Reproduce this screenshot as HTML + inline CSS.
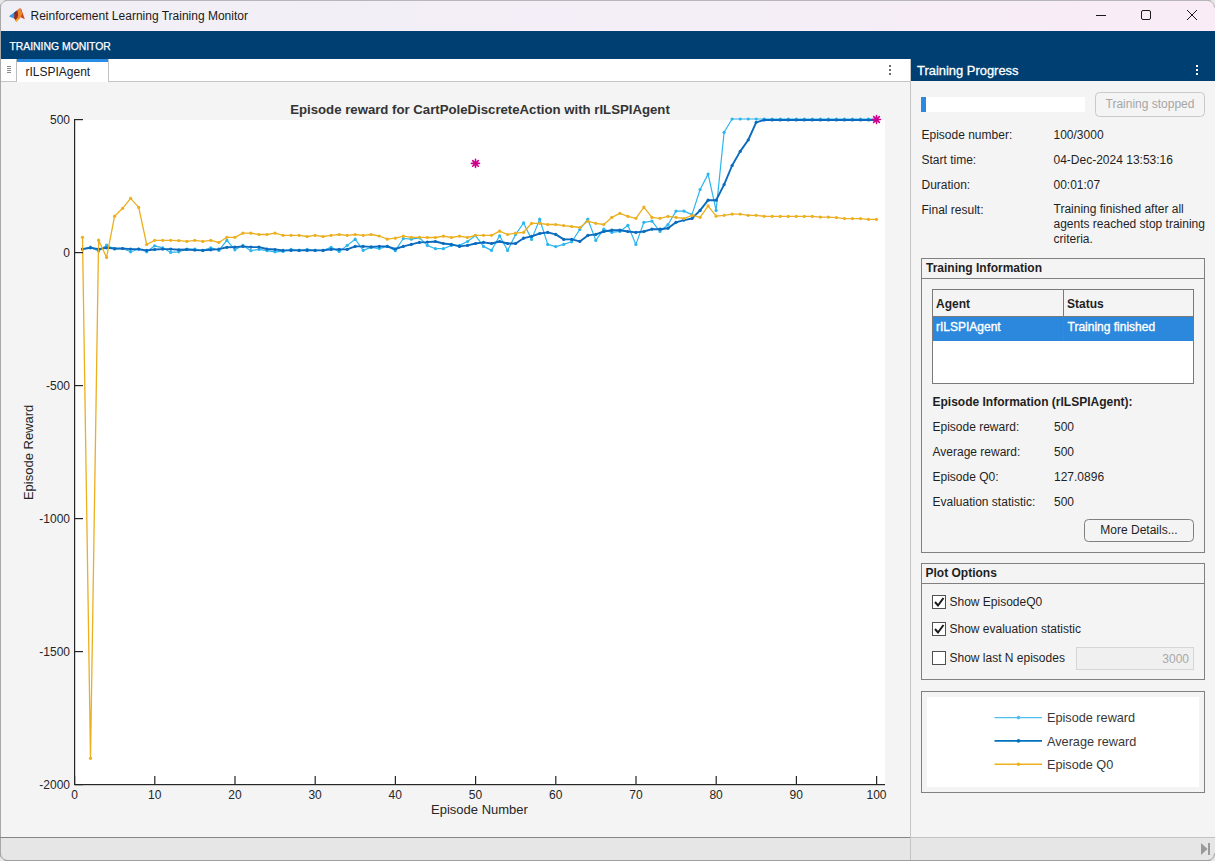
<!DOCTYPE html><html><head><meta charset="utf-8"><style>
html,body{margin:0;padding:0;width:1215px;height:861px;overflow:hidden;background:#f4f4f4;}
svg{display:block;position:absolute;left:0;top:0;}
text{font-family:"Liberation Sans", sans-serif;}
</style></head><body>
<svg width="1215" height="861" viewBox="0 0 1215 861">
<defs><linearGradient id="tb" x1="0" x2="1" y1="0" y2="0"><stop offset="0" stop-color="#f1eff6"/><stop offset="0.6" stop-color="#f4eef7"/><stop offset="1" stop-color="#f9ecf6"/></linearGradient></defs>
<rect x="0" y="0" width="1215" height="861" fill="#f4f4f4"/>
<rect x="0" y="0" width="1215" height="31" fill="url(#tb)"/>
<rect x="0" y="0" width="1215" height="1" fill="#b9b6bb"/>
<g><path d="M9.2,15.9 L14.5,12.3 L16.8,10.6 L16,18.3 L14.4,18.6 L9.6,16.8 Z" fill="#3b98df"/><path d="M14.3,13.2 L17.6,9.8 L19.2,17.4 L16.2,21.6 L14.2,18.6 Z" fill="#9e2a1c"/><path d="M17.4,9.9 L19.8,7.9 L21.9,13 L20.6,17.4 L16.2,22 L18.2,15 Z" fill="#ea8a2b"/><path d="M19.8,7.9 L21.4,9.3 L24.8,19.2 L20.6,17.3 L21.9,13 Z" fill="#d0491e"/><path d="M15.2,20 L18.4,17.6 L16.3,22.2 Z" fill="#f3b11f"/><path d="M13.6,13.2 L16.8,10.4 L15.6,14.2 Z" fill="#27457e"/></g>
<text x="30.5" y="20" font-size="12" fill="#1a1a1a">Reinforcement Learning Training Monitor</text>
<rect x="1096" y="15" width="10" height="1" fill="#1a1a1a"/>
<rect x="1141.5" y="10.5" width="9" height="9" rx="1.5" fill="none" stroke="#1a1a1a" stroke-width="1"/>
<path d="M1187,10 L1197,20 M1197,10 L1187,20" stroke="#1a1a1a" stroke-width="1"/>
<rect x="0" y="31" width="1215" height="28" fill="#003f72"/>
<text x="9.4" y="50" font-size="10.5" fill="#ffffff" stroke="#ffffff" stroke-width="0.25" textLength="101.5" lengthAdjust="spacingAndGlyphs">TRAINING MONITOR</text>
<rect x="1" y="59" width="909" height="22" fill="#ffffff"/>
<rect x="1" y="81" width="909" height="1" fill="#c4c4c4"/>
<rect x="17" y="81" width="91" height="1" fill="#ffffff"/>
<rect x="16" y="59" width="1" height="23" fill="#bdbdbd"/>
<rect x="108" y="59" width="1" height="23" fill="#c4c4c4"/>
<rect x="17" y="59" width="91" height="3" fill="#2a8de4"/>
<rect x="7" y="66" width="4" height="1" fill="#8a8a8a"/>
<rect x="7" y="68" width="4" height="1" fill="#8a8a8a"/>
<rect x="7" y="70" width="4" height="1" fill="#8a8a8a"/>
<rect x="7" y="72" width="4" height="1" fill="#8a8a8a"/>
<text x="25.5" y="76" font-size="12" fill="#1a1a1a">rILSPIAgent</text>
<rect x="889" y="65" width="2" height="2" fill="#6a6a6a"/>
<rect x="889" y="69" width="2" height="2" fill="#6a6a6a"/>
<rect x="889" y="73" width="2" height="2" fill="#6a6a6a"/>
<rect x="911" y="59" width="304" height="22" fill="#003f72"/>
<text x="917" y="75" font-size="13" fill="#ffffff" stroke="#ffffff" stroke-width="0.3" textLength="101.5" lengthAdjust="spacingAndGlyphs">Training Progress</text>
<rect x="1196" y="65" width="2" height="2" fill="#ffffff"/>
<rect x="1196" y="69" width="2" height="2" fill="#ffffff"/>
<rect x="1196" y="73" width="2" height="2" fill="#ffffff"/>
<rect x="910" y="59" width="1" height="802" fill="#c4c4c4"/>
<rect x="0" y="0" width="1" height="861" fill="#a8a8a8"/>
<rect x="0" y="837" width="910" height="1" fill="#858585"/>
<rect x="911" y="837" width="304" height="1" fill="#c2c2c2"/>
<rect x="1" y="838" width="909" height="22" fill="#e6e6e6"/>
<rect x="911" y="838" width="304" height="22" fill="#e6e6e6"/>
<rect x="0" y="860" width="1215" height="1" fill="#9e9e9e"/>
<path d="M1201,843 L1207.6,849 L1201,855 Z" fill="#9a9a9a"/><rect x="1208" y="843" width="2" height="12" fill="#9a9a9a"/>
<rect x="75" y="120" width="810" height="664" fill="#ffffff"/>
<text x="480" y="114" font-size="13.2" font-weight="bold" text-anchor="middle" fill="#333333">Episode reward for CartPoleDiscreteAction with rILSPIAgent</text>
<polyline points="82.5,249.1 90.5,247.2 98.6,251.1 106.6,245.2 114.6,249.1 122.6,248.5 130.6,251.8 138.7,249.1 146.7,251.8 154.7,245.8 162.7,247.8 170.7,252.4 178.8,251.8 186.8,249.1 194.8,249.1 202.8,250.4 210.8,247.8 218.9,250.4 226.9,240.4 234.9,249.8 242.9,245.4 250.9,250.7 259.0,249.4 267.0,250.7 275.0,251.8 283.0,251.4 291.0,249.4 299.1,250.4 307.1,249.4 315.1,250.4 323.1,250.4 331.1,247.4 339.2,251.6 347.2,245.4 355.2,239.2 363.2,250.4 371.2,247.4 379.3,248.6 387.3,246.4 395.3,250.7 403.3,238.5 411.3,239.2 419.4,237.8 427.4,245.4 435.4,248.7 443.4,248.7 451.4,245.4 459.5,245.4 467.5,241.5 475.5,235.6 483.5,246.4 491.5,250.4 499.6,235.8 507.6,250.4 515.6,234.5 523.6,222.9 531.6,239.4 539.7,219.2 547.7,244.4 555.7,246.6 563.7,244.4 571.7,241.8 579.8,229.5 587.8,219.2 595.8,240.4 603.8,229.2 611.8,232.4 619.9,231.5 627.9,225.3 635.9,244.4 643.9,222.3 651.9,221.2 660.0,231.5 668.0,224.5 676.0,211.1 684.0,211.1 692.0,214.6 700.1,189.5 708.1,174.1 716.1,210.4 724.1,132.3 732.1,119.0 740.2,119.0 748.2,119.0 756.2,119.0 764.2,119.0 772.2,119.0 780.3,119.0 788.3,119.0 796.3,119.0 804.3,119.0 812.3,119.0 820.4,119.0 828.4,119.0 836.4,119.0 844.4,119.0 852.4,119.0 860.5,119.0 868.5,119.0 876.5,119.0" fill="none" stroke-linejoin="round" stroke="#2db5ee" stroke-width="1.2"/>
<g fill="#2db5ee">
<circle cx="82.5" cy="249.1" r="1.6"/>
<circle cx="90.5" cy="247.2" r="1.6"/>
<circle cx="98.6" cy="251.1" r="1.6"/>
<circle cx="106.6" cy="245.2" r="1.6"/>
<circle cx="114.6" cy="249.1" r="1.6"/>
<circle cx="122.6" cy="248.5" r="1.6"/>
<circle cx="130.6" cy="251.8" r="1.6"/>
<circle cx="138.7" cy="249.1" r="1.6"/>
<circle cx="146.7" cy="251.8" r="1.6"/>
<circle cx="154.7" cy="245.8" r="1.6"/>
<circle cx="162.7" cy="247.8" r="1.6"/>
<circle cx="170.7" cy="252.4" r="1.6"/>
<circle cx="178.8" cy="251.8" r="1.6"/>
<circle cx="186.8" cy="249.1" r="1.6"/>
<circle cx="194.8" cy="249.1" r="1.6"/>
<circle cx="202.8" cy="250.4" r="1.6"/>
<circle cx="210.8" cy="247.8" r="1.6"/>
<circle cx="218.9" cy="250.4" r="1.6"/>
<circle cx="226.9" cy="240.4" r="1.6"/>
<circle cx="234.9" cy="249.8" r="1.6"/>
<circle cx="242.9" cy="245.4" r="1.6"/>
<circle cx="250.9" cy="250.7" r="1.6"/>
<circle cx="259.0" cy="249.4" r="1.6"/>
<circle cx="267.0" cy="250.7" r="1.6"/>
<circle cx="275.0" cy="251.8" r="1.6"/>
<circle cx="283.0" cy="251.4" r="1.6"/>
<circle cx="291.0" cy="249.4" r="1.6"/>
<circle cx="299.1" cy="250.4" r="1.6"/>
<circle cx="307.1" cy="249.4" r="1.6"/>
<circle cx="315.1" cy="250.4" r="1.6"/>
<circle cx="323.1" cy="250.4" r="1.6"/>
<circle cx="331.1" cy="247.4" r="1.6"/>
<circle cx="339.2" cy="251.6" r="1.6"/>
<circle cx="347.2" cy="245.4" r="1.6"/>
<circle cx="355.2" cy="239.2" r="1.6"/>
<circle cx="363.2" cy="250.4" r="1.6"/>
<circle cx="371.2" cy="247.4" r="1.6"/>
<circle cx="379.3" cy="248.6" r="1.6"/>
<circle cx="387.3" cy="246.4" r="1.6"/>
<circle cx="395.3" cy="250.7" r="1.6"/>
<circle cx="403.3" cy="238.5" r="1.6"/>
<circle cx="411.3" cy="239.2" r="1.6"/>
<circle cx="419.4" cy="237.8" r="1.6"/>
<circle cx="427.4" cy="245.4" r="1.6"/>
<circle cx="435.4" cy="248.7" r="1.6"/>
<circle cx="443.4" cy="248.7" r="1.6"/>
<circle cx="451.4" cy="245.4" r="1.6"/>
<circle cx="459.5" cy="245.4" r="1.6"/>
<circle cx="467.5" cy="241.5" r="1.6"/>
<circle cx="475.5" cy="235.6" r="1.6"/>
<circle cx="483.5" cy="246.4" r="1.6"/>
<circle cx="491.5" cy="250.4" r="1.6"/>
<circle cx="499.6" cy="235.8" r="1.6"/>
<circle cx="507.6" cy="250.4" r="1.6"/>
<circle cx="515.6" cy="234.5" r="1.6"/>
<circle cx="523.6" cy="222.9" r="1.6"/>
<circle cx="531.6" cy="239.4" r="1.6"/>
<circle cx="539.7" cy="219.2" r="1.6"/>
<circle cx="547.7" cy="244.4" r="1.6"/>
<circle cx="555.7" cy="246.6" r="1.6"/>
<circle cx="563.7" cy="244.4" r="1.6"/>
<circle cx="571.7" cy="241.8" r="1.6"/>
<circle cx="579.8" cy="229.5" r="1.6"/>
<circle cx="587.8" cy="219.2" r="1.6"/>
<circle cx="595.8" cy="240.4" r="1.6"/>
<circle cx="603.8" cy="229.2" r="1.6"/>
<circle cx="611.8" cy="232.4" r="1.6"/>
<circle cx="619.9" cy="231.5" r="1.6"/>
<circle cx="627.9" cy="225.3" r="1.6"/>
<circle cx="635.9" cy="244.4" r="1.6"/>
<circle cx="643.9" cy="222.3" r="1.6"/>
<circle cx="651.9" cy="221.2" r="1.6"/>
<circle cx="660.0" cy="231.5" r="1.6"/>
<circle cx="668.0" cy="224.5" r="1.6"/>
<circle cx="676.0" cy="211.1" r="1.6"/>
<circle cx="684.0" cy="211.1" r="1.6"/>
<circle cx="692.0" cy="214.6" r="1.6"/>
<circle cx="700.1" cy="189.5" r="1.6"/>
<circle cx="708.1" cy="174.1" r="1.6"/>
<circle cx="716.1" cy="210.4" r="1.6"/>
<circle cx="724.1" cy="132.3" r="1.6"/>
<circle cx="732.1" cy="119.0" r="1.6"/>
<circle cx="740.2" cy="119.0" r="1.6"/>
<circle cx="748.2" cy="119.0" r="1.6"/>
<circle cx="756.2" cy="119.0" r="1.6"/>
<circle cx="764.2" cy="119.0" r="1.6"/>
<circle cx="772.2" cy="119.0" r="1.6"/>
<circle cx="780.3" cy="119.0" r="1.6"/>
<circle cx="788.3" cy="119.0" r="1.6"/>
<circle cx="796.3" cy="119.0" r="1.6"/>
<circle cx="804.3" cy="119.0" r="1.6"/>
<circle cx="812.3" cy="119.0" r="1.6"/>
<circle cx="820.4" cy="119.0" r="1.6"/>
<circle cx="828.4" cy="119.0" r="1.6"/>
<circle cx="836.4" cy="119.0" r="1.6"/>
<circle cx="844.4" cy="119.0" r="1.6"/>
<circle cx="852.4" cy="119.0" r="1.6"/>
<circle cx="860.5" cy="119.0" r="1.6"/>
<circle cx="868.5" cy="119.0" r="1.6"/>
<circle cx="876.5" cy="119.0" r="1.6"/>
</g>
<polyline points="82.5,249.1 90.5,247.8 98.6,249.1 106.6,247.8 114.6,248.5 122.6,248.5 130.6,249.1 138.7,249.1 146.7,250.4 154.7,249.5 162.7,249.1 170.7,249.1 178.8,249.8 186.8,249.5 194.8,250.1 202.8,250.4 210.8,249.8 218.9,249.1 226.9,247.3 234.9,247.1 242.9,246.4 250.9,247.1 259.0,247.1 267.0,249.0 275.0,249.5 283.0,250.4 291.0,250.4 299.1,250.4 307.1,250.4 315.1,250.4 323.1,250.4 331.1,249.4 339.2,249.4 347.2,249.4 355.2,246.4 363.2,246.4 371.2,246.9 379.3,246.4 387.3,246.4 395.3,249.0 403.3,246.4 411.3,244.4 419.4,242.4 427.4,242.1 435.4,241.5 443.4,243.5 451.4,244.4 459.5,246.4 467.5,245.4 475.5,243.5 483.5,242.4 491.5,243.5 499.6,241.5 507.6,243.5 515.6,243.5 523.6,238.2 531.6,236.3 539.7,233.5 547.7,232.4 555.7,234.4 563.7,239.4 571.7,239.4 579.8,241.4 587.8,235.4 595.8,234.4 603.8,231.5 611.8,230.2 619.9,230.2 627.9,231.5 635.9,232.4 643.9,231.5 651.9,229.2 660.0,229.2 668.0,228.2 676.0,222.3 684.0,220.1 692.0,218.5 700.1,210.4 708.1,200.2 716.1,200.2 724.1,184.6 732.1,165.5 740.2,151.4 748.2,140.0 756.2,122.3 764.2,120.0 772.2,120.0 780.3,120.0 788.3,120.0 796.3,120.0 804.3,120.0 812.3,120.0 820.4,120.0 828.4,120.0 836.4,120.0 844.4,120.0 852.4,120.0 860.5,120.0 868.5,120.0 876.5,120.0" fill="none" stroke-linejoin="round" stroke="#0a6bbf" stroke-width="1.9"/>
<g fill="#0a6bbf">
<circle cx="82.5" cy="249.1" r="1.6"/>
<circle cx="90.5" cy="247.8" r="1.6"/>
<circle cx="98.6" cy="249.1" r="1.6"/>
<circle cx="106.6" cy="247.8" r="1.6"/>
<circle cx="114.6" cy="248.5" r="1.6"/>
<circle cx="122.6" cy="248.5" r="1.6"/>
<circle cx="130.6" cy="249.1" r="1.6"/>
<circle cx="138.7" cy="249.1" r="1.6"/>
<circle cx="146.7" cy="250.4" r="1.6"/>
<circle cx="154.7" cy="249.5" r="1.6"/>
<circle cx="162.7" cy="249.1" r="1.6"/>
<circle cx="170.7" cy="249.1" r="1.6"/>
<circle cx="178.8" cy="249.8" r="1.6"/>
<circle cx="186.8" cy="249.5" r="1.6"/>
<circle cx="194.8" cy="250.1" r="1.6"/>
<circle cx="202.8" cy="250.4" r="1.6"/>
<circle cx="210.8" cy="249.8" r="1.6"/>
<circle cx="218.9" cy="249.1" r="1.6"/>
<circle cx="226.9" cy="247.3" r="1.6"/>
<circle cx="234.9" cy="247.1" r="1.6"/>
<circle cx="242.9" cy="246.4" r="1.6"/>
<circle cx="250.9" cy="247.1" r="1.6"/>
<circle cx="259.0" cy="247.1" r="1.6"/>
<circle cx="267.0" cy="249.0" r="1.6"/>
<circle cx="275.0" cy="249.5" r="1.6"/>
<circle cx="283.0" cy="250.4" r="1.6"/>
<circle cx="291.0" cy="250.4" r="1.6"/>
<circle cx="299.1" cy="250.4" r="1.6"/>
<circle cx="307.1" cy="250.4" r="1.6"/>
<circle cx="315.1" cy="250.4" r="1.6"/>
<circle cx="323.1" cy="250.4" r="1.6"/>
<circle cx="331.1" cy="249.4" r="1.6"/>
<circle cx="339.2" cy="249.4" r="1.6"/>
<circle cx="347.2" cy="249.4" r="1.6"/>
<circle cx="355.2" cy="246.4" r="1.6"/>
<circle cx="363.2" cy="246.4" r="1.6"/>
<circle cx="371.2" cy="246.9" r="1.6"/>
<circle cx="379.3" cy="246.4" r="1.6"/>
<circle cx="387.3" cy="246.4" r="1.6"/>
<circle cx="395.3" cy="249.0" r="1.6"/>
<circle cx="403.3" cy="246.4" r="1.6"/>
<circle cx="411.3" cy="244.4" r="1.6"/>
<circle cx="419.4" cy="242.4" r="1.6"/>
<circle cx="427.4" cy="242.1" r="1.6"/>
<circle cx="435.4" cy="241.5" r="1.6"/>
<circle cx="443.4" cy="243.5" r="1.6"/>
<circle cx="451.4" cy="244.4" r="1.6"/>
<circle cx="459.5" cy="246.4" r="1.6"/>
<circle cx="467.5" cy="245.4" r="1.6"/>
<circle cx="475.5" cy="243.5" r="1.6"/>
<circle cx="483.5" cy="242.4" r="1.6"/>
<circle cx="491.5" cy="243.5" r="1.6"/>
<circle cx="499.6" cy="241.5" r="1.6"/>
<circle cx="507.6" cy="243.5" r="1.6"/>
<circle cx="515.6" cy="243.5" r="1.6"/>
<circle cx="523.6" cy="238.2" r="1.6"/>
<circle cx="531.6" cy="236.3" r="1.6"/>
<circle cx="539.7" cy="233.5" r="1.6"/>
<circle cx="547.7" cy="232.4" r="1.6"/>
<circle cx="555.7" cy="234.4" r="1.6"/>
<circle cx="563.7" cy="239.4" r="1.6"/>
<circle cx="571.7" cy="239.4" r="1.6"/>
<circle cx="579.8" cy="241.4" r="1.6"/>
<circle cx="587.8" cy="235.4" r="1.6"/>
<circle cx="595.8" cy="234.4" r="1.6"/>
<circle cx="603.8" cy="231.5" r="1.6"/>
<circle cx="611.8" cy="230.2" r="1.6"/>
<circle cx="619.9" cy="230.2" r="1.6"/>
<circle cx="627.9" cy="231.5" r="1.6"/>
<circle cx="635.9" cy="232.4" r="1.6"/>
<circle cx="643.9" cy="231.5" r="1.6"/>
<circle cx="651.9" cy="229.2" r="1.6"/>
<circle cx="660.0" cy="229.2" r="1.6"/>
<circle cx="668.0" cy="228.2" r="1.6"/>
<circle cx="676.0" cy="222.3" r="1.6"/>
<circle cx="684.0" cy="220.1" r="1.6"/>
<circle cx="692.0" cy="218.5" r="1.6"/>
<circle cx="700.1" cy="210.4" r="1.6"/>
<circle cx="708.1" cy="200.2" r="1.6"/>
<circle cx="716.1" cy="200.2" r="1.6"/>
<circle cx="724.1" cy="184.6" r="1.6"/>
<circle cx="732.1" cy="165.5" r="1.6"/>
<circle cx="740.2" cy="151.4" r="1.6"/>
<circle cx="748.2" cy="140.0" r="1.6"/>
<circle cx="756.2" cy="122.3" r="1.6"/>
<circle cx="764.2" cy="120.0" r="1.6"/>
<circle cx="772.2" cy="120.0" r="1.6"/>
<circle cx="780.3" cy="120.0" r="1.6"/>
<circle cx="788.3" cy="120.0" r="1.6"/>
<circle cx="796.3" cy="120.0" r="1.6"/>
<circle cx="804.3" cy="120.0" r="1.6"/>
<circle cx="812.3" cy="120.0" r="1.6"/>
<circle cx="820.4" cy="120.0" r="1.6"/>
<circle cx="828.4" cy="120.0" r="1.6"/>
<circle cx="836.4" cy="120.0" r="1.6"/>
<circle cx="844.4" cy="120.0" r="1.6"/>
<circle cx="852.4" cy="120.0" r="1.6"/>
<circle cx="860.5" cy="120.0" r="1.6"/>
<circle cx="868.5" cy="120.0" r="1.6"/>
<circle cx="876.5" cy="120.0" r="1.6"/>
</g>
<polyline points="82.5,237.3 90.5,758.3 98.6,240.2 106.6,257.4 114.6,216.2 122.6,208.3 130.6,198.4 138.7,207.4 146.7,244.5 154.7,240.3 162.7,240.3 170.7,240.3 178.8,240.6 186.8,241.4 194.8,240.3 202.8,241.4 210.8,240.3 218.9,242.5 226.9,237.3 234.9,237.3 242.9,233.2 250.9,233.2 259.0,234.5 267.0,234.5 275.0,233.2 283.0,235.3 291.0,235.3 299.1,235.3 307.1,236.5 315.1,235.3 323.1,236.5 331.1,235.3 339.2,234.5 347.2,235.3 355.2,234.5 363.2,235.3 371.2,234.5 379.3,236.0 387.3,239.2 395.3,238.2 403.3,236.2 411.3,237.3 419.4,237.3 427.4,237.5 435.4,237.5 443.4,236.2 451.4,237.5 459.5,236.2 467.5,237.5 475.5,235.3 483.5,235.3 491.5,235.3 499.6,231.2 507.6,234.5 515.6,233.2 523.6,232.3 531.6,223.3 539.7,223.3 547.7,224.5 555.7,224.5 563.7,225.6 571.7,226.5 579.8,227.5 587.8,221.2 595.8,223.3 603.8,224.5 611.8,217.4 619.9,213.3 627.9,216.3 635.9,218.3 643.9,207.1 651.9,217.4 660.0,218.3 668.0,216.3 676.0,217.4 684.0,218.5 692.0,215.3 700.1,217.3 708.1,205.9 716.1,216.2 724.1,215.3 732.1,214.1 740.2,214.1 748.2,215.3 756.2,215.3 764.2,216.3 772.2,216.3 780.3,216.4 788.3,216.4 796.3,216.4 804.3,216.4 812.3,216.4 820.4,217.1 828.4,217.1 836.4,217.6 844.4,218.6 852.4,218.6 860.5,218.6 868.5,219.4 876.5,219.4" fill="none" stroke-linejoin="round" stroke="#ecaf1f" stroke-width="1.3"/>
<g fill="#ecaf1f">
<circle cx="82.5" cy="237.3" r="1.6"/>
<circle cx="90.5" cy="758.3" r="1.6"/>
<circle cx="98.6" cy="240.2" r="1.6"/>
<circle cx="106.6" cy="257.4" r="1.6"/>
<circle cx="114.6" cy="216.2" r="1.6"/>
<circle cx="122.6" cy="208.3" r="1.6"/>
<circle cx="130.6" cy="198.4" r="1.6"/>
<circle cx="138.7" cy="207.4" r="1.6"/>
<circle cx="146.7" cy="244.5" r="1.6"/>
<circle cx="154.7" cy="240.3" r="1.6"/>
<circle cx="162.7" cy="240.3" r="1.6"/>
<circle cx="170.7" cy="240.3" r="1.6"/>
<circle cx="178.8" cy="240.6" r="1.6"/>
<circle cx="186.8" cy="241.4" r="1.6"/>
<circle cx="194.8" cy="240.3" r="1.6"/>
<circle cx="202.8" cy="241.4" r="1.6"/>
<circle cx="210.8" cy="240.3" r="1.6"/>
<circle cx="218.9" cy="242.5" r="1.6"/>
<circle cx="226.9" cy="237.3" r="1.6"/>
<circle cx="234.9" cy="237.3" r="1.6"/>
<circle cx="242.9" cy="233.2" r="1.6"/>
<circle cx="250.9" cy="233.2" r="1.6"/>
<circle cx="259.0" cy="234.5" r="1.6"/>
<circle cx="267.0" cy="234.5" r="1.6"/>
<circle cx="275.0" cy="233.2" r="1.6"/>
<circle cx="283.0" cy="235.3" r="1.6"/>
<circle cx="291.0" cy="235.3" r="1.6"/>
<circle cx="299.1" cy="235.3" r="1.6"/>
<circle cx="307.1" cy="236.5" r="1.6"/>
<circle cx="315.1" cy="235.3" r="1.6"/>
<circle cx="323.1" cy="236.5" r="1.6"/>
<circle cx="331.1" cy="235.3" r="1.6"/>
<circle cx="339.2" cy="234.5" r="1.6"/>
<circle cx="347.2" cy="235.3" r="1.6"/>
<circle cx="355.2" cy="234.5" r="1.6"/>
<circle cx="363.2" cy="235.3" r="1.6"/>
<circle cx="371.2" cy="234.5" r="1.6"/>
<circle cx="379.3" cy="236.0" r="1.6"/>
<circle cx="387.3" cy="239.2" r="1.6"/>
<circle cx="395.3" cy="238.2" r="1.6"/>
<circle cx="403.3" cy="236.2" r="1.6"/>
<circle cx="411.3" cy="237.3" r="1.6"/>
<circle cx="419.4" cy="237.3" r="1.6"/>
<circle cx="427.4" cy="237.5" r="1.6"/>
<circle cx="435.4" cy="237.5" r="1.6"/>
<circle cx="443.4" cy="236.2" r="1.6"/>
<circle cx="451.4" cy="237.5" r="1.6"/>
<circle cx="459.5" cy="236.2" r="1.6"/>
<circle cx="467.5" cy="237.5" r="1.6"/>
<circle cx="475.5" cy="235.3" r="1.6"/>
<circle cx="483.5" cy="235.3" r="1.6"/>
<circle cx="491.5" cy="235.3" r="1.6"/>
<circle cx="499.6" cy="231.2" r="1.6"/>
<circle cx="507.6" cy="234.5" r="1.6"/>
<circle cx="515.6" cy="233.2" r="1.6"/>
<circle cx="523.6" cy="232.3" r="1.6"/>
<circle cx="531.6" cy="223.3" r="1.6"/>
<circle cx="539.7" cy="223.3" r="1.6"/>
<circle cx="547.7" cy="224.5" r="1.6"/>
<circle cx="555.7" cy="224.5" r="1.6"/>
<circle cx="563.7" cy="225.6" r="1.6"/>
<circle cx="571.7" cy="226.5" r="1.6"/>
<circle cx="579.8" cy="227.5" r="1.6"/>
<circle cx="587.8" cy="221.2" r="1.6"/>
<circle cx="595.8" cy="223.3" r="1.6"/>
<circle cx="603.8" cy="224.5" r="1.6"/>
<circle cx="611.8" cy="217.4" r="1.6"/>
<circle cx="619.9" cy="213.3" r="1.6"/>
<circle cx="627.9" cy="216.3" r="1.6"/>
<circle cx="635.9" cy="218.3" r="1.6"/>
<circle cx="643.9" cy="207.1" r="1.6"/>
<circle cx="651.9" cy="217.4" r="1.6"/>
<circle cx="660.0" cy="218.3" r="1.6"/>
<circle cx="668.0" cy="216.3" r="1.6"/>
<circle cx="676.0" cy="217.4" r="1.6"/>
<circle cx="684.0" cy="218.5" r="1.6"/>
<circle cx="692.0" cy="215.3" r="1.6"/>
<circle cx="700.1" cy="217.3" r="1.6"/>
<circle cx="708.1" cy="205.9" r="1.6"/>
<circle cx="716.1" cy="216.2" r="1.6"/>
<circle cx="724.1" cy="215.3" r="1.6"/>
<circle cx="732.1" cy="214.1" r="1.6"/>
<circle cx="740.2" cy="214.1" r="1.6"/>
<circle cx="748.2" cy="215.3" r="1.6"/>
<circle cx="756.2" cy="215.3" r="1.6"/>
<circle cx="764.2" cy="216.3" r="1.6"/>
<circle cx="772.2" cy="216.3" r="1.6"/>
<circle cx="780.3" cy="216.4" r="1.6"/>
<circle cx="788.3" cy="216.4" r="1.6"/>
<circle cx="796.3" cy="216.4" r="1.6"/>
<circle cx="804.3" cy="216.4" r="1.6"/>
<circle cx="812.3" cy="216.4" r="1.6"/>
<circle cx="820.4" cy="217.1" r="1.6"/>
<circle cx="828.4" cy="217.1" r="1.6"/>
<circle cx="836.4" cy="217.6" r="1.6"/>
<circle cx="844.4" cy="218.6" r="1.6"/>
<circle cx="852.4" cy="218.6" r="1.6"/>
<circle cx="860.5" cy="218.6" r="1.6"/>
<circle cx="868.5" cy="219.4" r="1.6"/>
<circle cx="876.5" cy="219.4" r="1.6"/>
</g>
<path d="M471.50,163.40 L479.50,163.40 M472.67,160.57 L478.33,166.23 M475.50,159.40 L475.50,167.40 M478.33,160.57 L472.67,166.23" stroke="#cf008e" stroke-width="1.6" stroke-linecap="round"/>
<path d="M872.50,119.50 L880.50,119.50 M873.67,116.67 L879.33,122.33 M876.50,115.50 L876.50,123.50 M879.33,116.67 L873.67,122.33" stroke="#cf008e" stroke-width="1.6" stroke-linecap="round"/>
<g fill="#262626">
<rect x="74" y="119" width="1.2" height="666"/>
<rect x="74" y="784" width="811" height="1.2"/>
<rect x="74.0" y="776" width="1.2" height="8"/>
<text x="74.5" y="799" font-size="12" text-anchor="middle">0</text>
<rect x="154.2" y="776" width="1.2" height="8"/>
<text x="154.7" y="799" font-size="12" text-anchor="middle">10</text>
<rect x="234.4" y="776" width="1.2" height="8"/>
<text x="234.9" y="799" font-size="12" text-anchor="middle">20</text>
<rect x="314.6" y="776" width="1.2" height="8"/>
<text x="315.1" y="799" font-size="12" text-anchor="middle">30</text>
<rect x="394.8" y="776" width="1.2" height="8"/>
<text x="395.3" y="799" font-size="12" text-anchor="middle">40</text>
<rect x="475.0" y="776" width="1.2" height="8"/>
<text x="475.5" y="799" font-size="12" text-anchor="middle">50</text>
<rect x="555.2" y="776" width="1.2" height="8"/>
<text x="555.7" y="799" font-size="12" text-anchor="middle">60</text>
<rect x="635.4" y="776" width="1.2" height="8"/>
<text x="635.9" y="799" font-size="12" text-anchor="middle">70</text>
<rect x="715.6" y="776" width="1.2" height="8"/>
<text x="716.1" y="799" font-size="12" text-anchor="middle">80</text>
<rect x="795.8" y="776" width="1.2" height="8"/>
<text x="796.3" y="799" font-size="12" text-anchor="middle">90</text>
<rect x="876.0" y="776" width="1.2" height="8"/>
<text x="876.5" y="799" font-size="12" text-anchor="middle">100</text>
<rect x="75" y="119.0" width="8" height="1.2"/>
<text x="70" y="123.6" font-size="12" text-anchor="end">500</text>
<rect x="75" y="252.0" width="8" height="1.2"/>
<text x="70" y="256.6" font-size="12" text-anchor="end">0</text>
<rect x="75" y="385.0" width="8" height="1.2"/>
<text x="70" y="389.6" font-size="12" text-anchor="end">-500</text>
<rect x="75" y="518.0" width="8" height="1.2"/>
<text x="70" y="522.6" font-size="12" text-anchor="end">-1000</text>
<rect x="75" y="651.0" width="8" height="1.2"/>
<text x="70" y="655.6" font-size="12" text-anchor="end">-1500</text>
<rect x="75" y="784.0" width="8" height="1.2"/>
<text x="70" y="788.6" font-size="12" text-anchor="end">-2000</text>
</g>
<text x="479.5" y="814" font-size="13" text-anchor="middle" fill="#262626">Episode Number</text>
<text transform="translate(32.9,452.4) rotate(-90)" x="0" y="0" font-size="13" text-anchor="middle" fill="#262626">Episode Reward</text>
<rect x="921" y="97" width="164" height="15" fill="#ffffff"/>
<rect x="921" y="97" width="5" height="15" fill="#2d89e0"/>
<rect x="1095.5" y="92.5" width="109" height="24" rx="4" fill="#f4f4f4" stroke="#c9c9c9"/>
<text x="1150" y="108" font-size="12" fill="#a6a6a6" text-anchor="middle">Training stopped</text>
<text x="921.5" y="139" font-size="12" fill="#1f1f1f">Episode number:</text>
<text x="1053.5" y="139" font-size="12" fill="#1f1f1f">100/3000</text>
<text x="921.5" y="164" font-size="12" fill="#1f1f1f">Start time:</text>
<text x="1053.5" y="164" font-size="12" fill="#1f1f1f">04-Dec-2024 13:53:16</text>
<text x="921.5" y="189" font-size="12" fill="#1f1f1f">Duration:</text>
<text x="1053.5" y="189" font-size="12" fill="#1f1f1f">00:01:07</text>
<text x="921.5" y="214" font-size="12" fill="#1f1f1f">Final result:</text>
<text x="1053.5" y="213" font-size="12" fill="#1f1f1f">Training finished after all</text>
<text x="1053.5" y="228" font-size="12" fill="#1f1f1f">agents reached stop training</text>
<text x="1053.5" y="243" font-size="12" fill="#1f1f1f">criteria.</text>
<rect x="921.5" y="258.5" width="283" height="294" fill="none" stroke="#808080"/>
<rect x="922" y="278" width="282" height="1" fill="#808080"/>
<text x="926" y="272" font-size="12" fill="#1f1f1f" font-weight="bold">Training Information</text>
<rect x="932.5" y="289.5" width="261" height="94" fill="#ffffff" stroke="#7a7a7a"/>
<rect x="933" y="290" width="260" height="26" fill="#f4f4f4"/>
<rect x="933" y="316" width="260" height="1" fill="#7a7a7a"/>
<rect x="933" y="317" width="260" height="24" fill="#2b88dc"/>
<rect x="1063" y="290" width="1" height="51" fill="#7a7a7a"/>
<text x="936" y="308" font-size="12" fill="#1f1f1f" font-weight="bold">Agent</text>
<text x="1067" y="308" font-size="12" fill="#1f1f1f" font-weight="bold">Status</text>
<g stroke="#ffffff" stroke-width="0.35">
<text x="936" y="331" font-size="12" fill="#ffffff">rILSPIAgent</text>
<text x="1067.5" y="331" font-size="12" fill="#ffffff">Training finished</text>
</g>
<text x="932.5" y="406" font-size="12" fill="#1f1f1f" font-weight="bold">Episode Information (rILSPIAgent):</text>
<text x="932.5" y="431" font-size="12" fill="#1f1f1f">Episode reward:</text>
<text x="1054" y="431" font-size="12" fill="#1f1f1f">500</text>
<text x="932.5" y="456" font-size="12" fill="#1f1f1f">Average reward:</text>
<text x="1054" y="456" font-size="12" fill="#1f1f1f">500</text>
<text x="932.5" y="481" font-size="12" fill="#1f1f1f">Episode Q0:</text>
<text x="1054" y="481" font-size="12" fill="#1f1f1f">127.0896</text>
<text x="932.5" y="506" font-size="12" fill="#1f1f1f">Evaluation statistic:</text>
<text x="1054" y="506" font-size="12" fill="#1f1f1f">500</text>
<rect x="1084.5" y="519.5" width="109" height="22" rx="4" fill="#f4f4f4" stroke="#7f7f7f"/>
<text x="1139" y="534" font-size="12" fill="#1f1f1f" text-anchor="middle">More Details...</text>
<rect x="921.5" y="563.5" width="283" height="116" fill="none" stroke="#808080"/>
<rect x="922" y="583" width="282" height="1" fill="#808080"/>
<text x="925.5" y="577" font-size="12" fill="#1f1f1f" font-weight="bold">Plot Options</text>
<rect x="932.5" y="595.5" width="13" height="13" fill="#ffffff" stroke="#505050"/>
<path d="M935,602.0 L938,605.5 L943.5,598.0" fill="none" stroke="#1a1a1a" stroke-width="2"/>
<text x="949.5" y="606.0" font-size="12" fill="#1f1f1f">Show EpisodeQ0</text>
<rect x="932.5" y="622.5" width="13" height="13" fill="#ffffff" stroke="#505050"/>
<path d="M935,629.0 L938,632.5 L943.5,625.0" fill="none" stroke="#1a1a1a" stroke-width="2"/>
<text x="949.5" y="633.0" font-size="12" fill="#1f1f1f">Show evaluation statistic</text>
<rect x="932.5" y="651.5" width="13" height="13" fill="#ffffff" stroke="#505050"/>
<text x="949.5" y="662.0" font-size="12" fill="#1f1f1f">Show last N episodes</text>
<rect x="1076.5" y="647.5" width="117" height="22" fill="#f0f0f0" stroke="#d6d6d6"/>
<text x="1189" y="663" font-size="12" fill="#a8a8a8" text-anchor="end">3000</text>
<rect x="921.5" y="691.5" width="283" height="101" fill="none" stroke="#808080"/>
<rect x="927" y="697" width="272" height="90" fill="#ffffff"/>
<path d="M994.5,717.6 L1042,717.6" stroke="#4dbeee" stroke-width="1.2"/>
<circle cx="1018.5" cy="717.6" r="1.8" fill="#4dbeee"/>
<text x="1047" y="722.2" font-size="12.7" fill="#383838">Episode reward</text>
<path d="M994.5,740.9 L1042,740.9" stroke="#0072bd" stroke-width="1.6"/>
<circle cx="1018.5" cy="740.9" r="1.8" fill="#0072bd"/>
<text x="1047" y="745.5" font-size="12.7" fill="#383838">Average reward</text>
<path d="M994.5,764.2 L1042,764.2" stroke="#edb120" stroke-width="1.4"/>
<circle cx="1018.5" cy="764.2" r="1.8" fill="#edb120"/>
<text x="1047" y="768.8" font-size="12.7" fill="#383838">Episode Q0</text>
<path d="M0,0 H7 A7,7 0 0 0 0,7 Z" fill="#e6e6e6"/><path d="M0.5,7.5 A7,7 0 0 1 7.5,0.5" fill="none" stroke="#b0b0b0"/>
<path d="M1215,0 H1208 A7,7 0 0 1 1215,7 Z" fill="#e6e6e6"/><path d="M1207.5,0.5 A7,7 0 0 1 1214.5,7.5" fill="none" stroke="#b0b0b0"/>
<path d="M0,861 H7 A7,7 0 0 1 0,854 Z" fill="#e6e6e6"/><path d="M0.5,853.5 A7,7 0 0 0 7.5,860.5" fill="none" stroke="#a0a0a0"/>
<path d="M1215,861 H1208 A7,7 0 0 0 1215,854 Z" fill="#e6e6e6"/><path d="M1207.5,860.5 A7,7 0 0 0 1214.5,853.5" fill="none" stroke="#a0a0a0"/>
</svg></body></html>
